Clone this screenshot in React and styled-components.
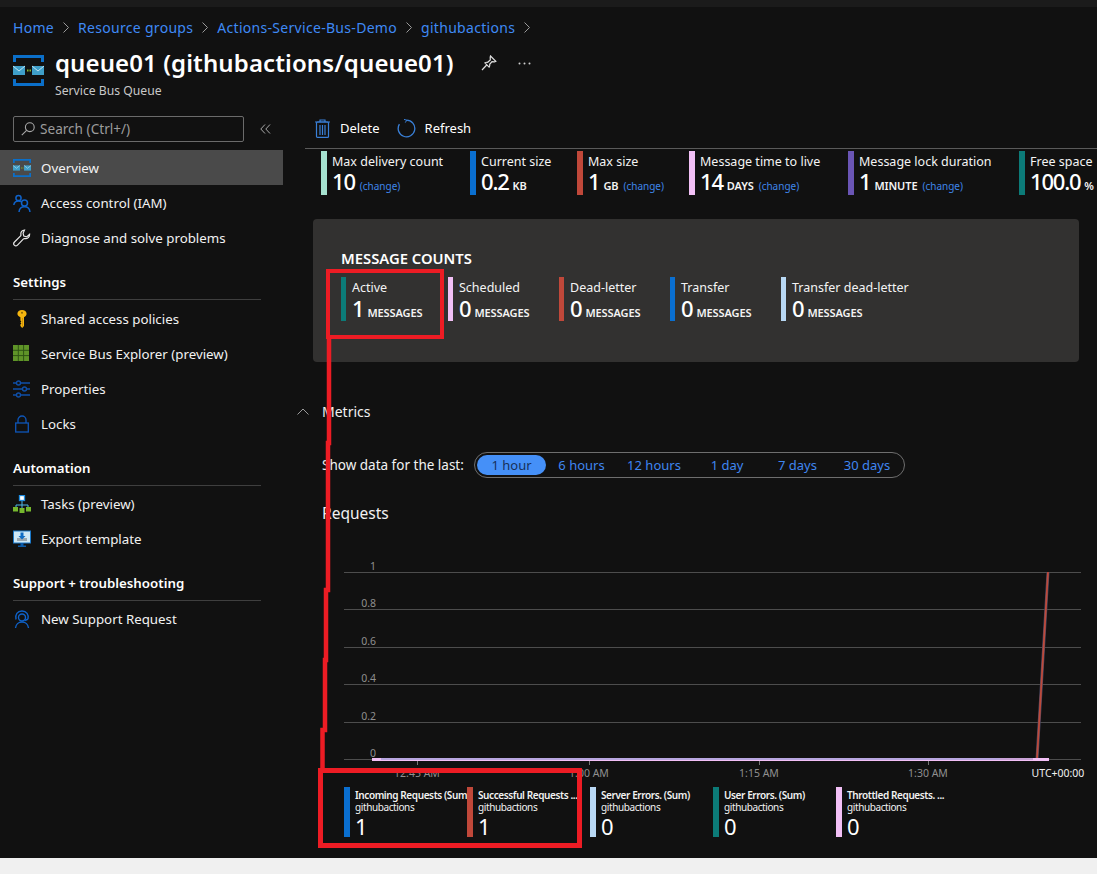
import React from "react";
import styled, { createGlobalStyle } from "styled-components";

const Global = createGlobalStyle`
  html, body { margin: 0; padding: 0; background: #f0f0f0; }
  body { font-family: "Noto Sans", "Liberation Sans", sans-serif; color: #f2f2f2; }
`;

const Page = styled.div`
  position: relative;
  width: 1097px;
  height: 874px;
  overflow: hidden;
  background: #f0f0f0;
`;

const Portal = styled.div`
  height: 858px;
  background: #111111;
  display: flex;
  flex-direction: column;
`;

const TopStrip = styled.div`
  height: 7px;
  background: #1b1b1b;
  flex: none;
`;

const Header = styled.header`
  height: 105px;
  flex: none;
  padding-left: 13px;
`;

const Breadcrumb = styled.nav`
  display: flex;
  align-items: center;
  height: 20px;
  margin-top: 10px;
  font-size: 14px;
  letter-spacing: 0.3px;
  a { color: #3f8af5; text-decoration: none; }
  svg { margin: 0 9px 0 9px; }
`;

const TitleRow = styled.div`
  display: flex;
  align-items: flex-start;
  margin-top: 10px;
`;

const TitleIcon = styled.div`
  width: 31px;
  height: 31px;
  margin-top: 8px;
  margin-right: 11px;
`;

const Title = styled.h1`
  margin: 0;
  font-size: 24px;
  line-height: 32px;
  font-weight: 600;
  letter-spacing: 0.1px;
  color: #fff;
  white-space: nowrap;
`;

const Subtitle = styled.div`
  font-size: 12.2px;
  line-height: 16px;
  margin-top: 4px;
  color: #c8c8c8;
`;

const TitleAction = styled.div`
  margin-left: ${p => p.$gap}px;
  margin-top: 6px;
  height: 20px;
  display: flex;
  align-items: center;
`;

const Body = styled.div`
  display: flex;
  flex: 1;
  min-height: 0;
`;

const Sidebar = styled.aside`
  width: 283px;
  flex: none;
`;

const SearchRow = styled.div`
  display: flex;
  align-items: center;
  height: 26px;
  margin: 4px 0 8px 13px;
`;

const SearchBox = styled.div`
  width: 231px;
  height: 26px;
  box-sizing: border-box;
  border: 1px solid #6b6b6b;
  border-radius: 2px;
  display: flex;
  align-items: center;
  padding: 0 0 1px 7px;
  gap: 5px;
  font-size: 13.6px;
  color: #9c9c9c;
`;

const Collapse = styled.div`
  margin-left: 16px;
  display: flex;
`;

const NavRow = styled.div`
  display: flex;
  align-items: center;
  height: 35px;
  padding-left: 13px;
  gap: 10px;
  font-size: 13.3px;
  color: #f2f2f2;
  background: ${p => (p.$active ? "#4a4a4a" : "transparent")};
`;

const NavIcon = styled.span`
  width: 18px;
  height: 18px;
  display: flex;
  flex: none;
`;

const SectionTitle = styled.div`
  margin: 0 22px ${p => p.$after}px 13px;
  height: 45px;
  box-sizing: border-box;
  display: flex;
  align-items: flex-end;
  padding-bottom: 7px;
  line-height: 20px;
  border-bottom: 1px solid #3f3f3f;
  font-size: 13.3px;
  font-weight: 600;
  color: #fff;
`;

const Main = styled.main`
  flex: 1;
  min-width: 0;
`;

const Toolbar = styled.div`
  height: 37px;
  box-sizing: border-box;
  margin-left: 22px;
  border-bottom: 1px solid #5a5a5a;
  display: flex;
  align-items: center;
  padding-bottom: 4px;
  font-size: 13px;
  color: #fff;
`;

const ToolButton = styled.div`
  display: flex;
  align-items: center;
  gap: ${p => p.$gap}px;
  margin-left: ${p => p.$left}px;
`;

const Essentials = styled.div`
  display: grid;
  grid-template-columns: 149px 107px 112px 159px 171px 78px;
  margin: 2px 0 0 38px;
  height: 44px;
  white-space: nowrap;
`;

const Tile = styled.div`
  position: relative;
  height: ${p => p.$tall}px;
  padding-left: ${p => p.$pad}px;
  border-left: ${p => p.$bar}px solid ${p => p.$color};
`;

const TileLabel = styled.div`
  font-size: 12.5px;
  line-height: 18px;
  margin-top: 2px;
  margin-bottom: -1px;
  color: #f4f4f4;
`;

const EssentialLabel = styled(TileLabel)`
  margin-bottom: -2px;
`;

const TileValue = styled.div`
  display: flex;
  align-items: baseline;
  gap: 4px;
  line-height: 24px;
  font-size: 22px;
  letter-spacing: -1.2px;
  font-weight: 500;
  color: #fff;
`;

const Unit = styled.span`
  font-size: 11px;
  font-weight: 600;
  letter-spacing: -0.1px;
  color: #f4f4f4;
  text-transform: uppercase;
`;

const Change = styled.span`
  font-size: 10px;
  letter-spacing: 0;
  font-weight: 400;
  color: #3f86e8;
  margin-left: 1px;
`;

const CountCard = styled.section`
  width: 766px;
  height: 143px;
  margin: 24px 0 0 30px;
  box-sizing: border-box;
  background: #323130;
  border-radius: 4px;
  padding: 28px 0 0 28px;
`;

const CardTitle = styled.h2`
  margin: 0 0 8px;
  font-size: 14.8px;
  line-height: 22px;
  font-weight: 600;
  color: #fff;
`;

const CountRow = styled.div`
  display: grid;
  grid-template-columns: 107px 111px 111px 111px 150px;
  white-space: nowrap;
`;

const MetricsRow = styled.div`
  display: flex;
  align-items: center;
  margin: 39px 0 0 14px;
  height: 20px;
  gap: 13px;
  font-size: 14px;
  color: #f2f2f2;
`;

const RangeRow = styled.div`
  display: flex;
  align-items: center;
  margin: 31px 0 0 39px;
  height: 26px;
  font-size: 13.5px;
  color: #f2f2f2;
  white-space: nowrap;
`;

const RangeLabel = styled.div`
  width: 152px;
`;

const RangePill = styled.div`
  width: 431px;
  height: 26px;
  box-sizing: border-box;
  border: 1px solid #6e6e6e;
  border-radius: 13px;
  padding: 2px;
  display: flex;
`;

const RangeOption = styled.div`
  width: ${p => p.$w}px;
  height: 20px;
  line-height: 20px;
  text-align: center;
  font-size: 13px;
  border-radius: 10px;
  color: ${p => (p.$on ? "#17305a" : "#3f86f0")};
  background: ${p => (p.$on ? "#4590f8" : "transparent")};
`;

const ChartTitle = styled.h3`
  margin: 24px 0 0 39px;
  height: 22px;
  line-height: 22px;
  font-size: 15.5px;
  font-weight: 400;
  color: #f2f2f2;
`;

const ChartFrame = styled.svg`
  display: block;
  margin: 29px 0 0 39px;
  width: 775px;
  height: 232px;
  font-family: "Noto Sans", "Liberation Sans", sans-serif;
`;

const Legend = styled.div`
  display: grid;
  grid-template-columns: repeat(5, 123px);
  margin: 2px 0 0 61px;
  white-space: nowrap;
`;

const LegendItem = styled(Tile)`
  box-sizing: border-box;
  overflow: hidden;
  padding-top: 2px;
`;

const LegendLine = styled.div`
  font-size: 10px;
  line-height: 12px;
  letter-spacing: -0.4px;
  font-weight: ${p => (p.$strong ? 600 : 400)};
  color: #f2f2f2;
`;

const LegendValue = styled.div`
  font-size: 22px;
  line-height: 26px;
  letter-spacing: -1px;
  color: #fff;
`;

const RedBox = styled.div`
  position: absolute;
  left: ${p => p.$x}px;
  top: ${p => p.$y}px;
  width: ${p => p.$w}px;
  height: ${p => p.$h}px;
  box-sizing: border-box;
  border: ${p => p.$t}px solid #ed1c24;
  pointer-events: none;
`;

const RedLine = styled.svg`
  position: absolute;
  left: 316px;
  top: 335px;
`;

const BusIcon = () => (
  <svg width="100%" height="100%" viewBox="0 0 31 31">
    <path d="M0 0h31v7h-3V3H3v4H0zM0 31h31v-7h-3v4H3v-4H0z" fill="#0b6fc9" />
    <rect x="0" y="11" width="12" height="9" fill="#3f9fc9" />
    <rect x="19" y="11" width="12" height="9" fill="#3f9fc9" />
    <path d="M0 11l6 5 6-5M19 11l6 5 6-5" fill="none" stroke="#cfeaf5" strokeWidth=".9" />
    <path d="M14 14.500h1.500v2H14zM16.500 14.500H18v2h-1.500z" fill="#84b82c" />
  </svg>
);

const AccessIcon = () => (
  <svg width="18" height="18" viewBox="0 0 18 18" fill="none" stroke="#0f62c9" strokeWidth="1.500">
    <circle cx="5.500" cy="4" r="2.600" />
    <path d="M.8 11c.4-2.600 2.200-4 4.700-4 1 0 1.800.2 2.500.7" />
    <circle cx="11.500" cy="9" r="3" />
    <path d="M6 18c.3-3 2.400-5.200 5.500-5.200S16.700 15 17 18" />
  </svg>
);

const WrenchIcon = () => (
  <svg width="18" height="18" viewBox="0 0 18 18" fill="none" stroke="#e8e8e8" strokeWidth="1.200">
    <path d="M11.500 1c-2.400.2-4 2.200-3.600 4.600.1.500.1.900-.3 1.300L1.500 13c-1 1-1 2.300-.2 3.200.9.900 2.200.9 3.200-.1l6-6.200c.4-.4.800-.4 1.300-.3 2.600.5 5-1.600 4.800-4.400l-3 2.700-2.800-.8-.7-2.800z" />
  </svg>
);

const KeyIcon = () => (
  <svg width="18" height="18" viewBox="0 0 18 18">
    <path d="M9 0c2.600 0 4.600 1.600 4.600 3.800 0 1.600-1 2.800-2.600 3.400V16l-1.800 2L7.400 16v-1.400l1-1-1-1 1-1-1-1V7.200C5.600 6.600 4.400 5.400 4.400 3.800 4.400 1.600 6.400 0 9 0z" fill="#f6b60f" />
    <circle cx="9" cy="2.700" r="1" fill="#8a6408" />
    <path d="M10 8v8l-.8 1V8z" fill="#c98d08" />
  </svg>
);

const GridIcon = () => (
  <svg width="16" height="16" viewBox="0 0 16 16">
    <rect width="16" height="16" fill="#5f9428" />
    <path d="M5.300 0v16M10.600 0v16M0 5.300h16M0 10.600h16" stroke="#2f5414" strokeWidth="1" />
  </svg>
);

const SlidersIcon = () => (
  <svg width="18" height="18" viewBox="0 0 18 18" fill="none" stroke="#0f4fa8" strokeWidth="1.400">
    <path d="M0 3h3.500M7.500 3H17M0 9h9.500M13.500 9H17M0 15h3.500M7.500 15H17" />
    <circle cx="5.500" cy="3" r="2" />
    <circle cx="11.500" cy="9" r="2" />
    <circle cx="5.500" cy="15" r="2" />
  </svg>
);

const LockIcon = () => (
  <svg width="18" height="18" viewBox="0 0 18 18" fill="none" stroke="#0f56b8" strokeWidth="1.300">
    <rect x="2.700" y="8" width="12.600" height="9" />
    <path d="M5 8V5a4 4 0 0 1 8 0v3" />
  </svg>
);

const TasksIcon = () => (
  <svg width="18" height="18" viewBox="0 0 18 18">
    <path d="M9 5v4M3 13v-3h12v3M9 9v4" fill="none" stroke="#4fb8e8" strokeWidth="1" />
    <rect x="6.500" y="0.500" width="5" height="5" fill="#fff" stroke="#1f8de0" strokeWidth="1.300" />
    <rect x="0" y="12" width="5" height="4.500" fill="#76b82e" />
    <rect x="6.500" y="13" width="5" height="5" fill="#76b82e" />
    <rect x="13" y="12" width="5" height="4.500" fill="#76b82e" />
  </svg>
);

const ExportIcon = () => (
  <svg width="18" height="18" viewBox="0 0 18 18">
    <rect x="0.500" y="1" width="17" height="12" fill="#cfe8f6" stroke="#1b78c8" strokeWidth="1" />
    <rect x="4" y="8" width="10" height="3" fill="#9aa8b2" />
    <path d="M7.500 2.500h3V6h2L9 9.500 5.500 6h2z" fill="#0f6cc4" />
    <path d="M7.500 13h3v2.500H13V17H5v-1.500h2.500z" fill="#0b5aa8" />
  </svg>
);

const SupportIcon = () => (
  <svg width="18" height="18" viewBox="0 0 18 18" fill="none" stroke="#0f62c9" strokeWidth="1.400">
    <path d="M3 9.500C1.800 4.500 4.500 1 9 1s7 3.500 6 8" />
    <circle cx="9" cy="7.500" r="3.500" />
    <path d="M2.500 18c.3-3.500 3-6 6.500-6s6.200 2.500 6.500 6" />
    <path d="M15 9l-3 1.500" />
  </svg>
);

const Chevron = () => (
  <svg width="6" height="11" viewBox="0 0 6 11" fill="none" stroke="#9a9a9a" strokeWidth="1">
    <path d="M.5.500l5 5-5 5" />
  </svg>
);

const PinIcon = () => (
  <svg width="16" height="16" viewBox="0 0 16 16" fill="none" stroke="#dedede" strokeWidth="1.200">
    <path d="M9.500 1l5.300 5.200-1.300.6-2.500-.1-2.300 2.600c.2 1.200 0 2-.6 2.800L3.900 7.900c.8-.6 1.700-.8 2.800-.6l2.600-2.400-.1-2.500zM5.700 10L1 15" />
  </svg>
);

const TrashIcon = () => (
  <svg width="15" height="19" viewBox="0 0 15 19" fill="none" stroke="#3a80d8" strokeWidth="1.200">
    <path d="M0 3h15M5 3V1h5v2" />
    <rect x="1.500" y="3" width="12" height="15.400" rx="1" />
    <path d="M5 6v10M7.500 6v10M10 6v10" />
  </svg>
);

const RefreshIcon = () => (
  <svg width="19" height="19" viewBox="0 0 19 19" fill="none" stroke="#3a80d8" strokeWidth="1.300">
    <path d="M9.500 1.200A8.300 8.300 0 1 1 2.400 5.200" />
    <path d="M7 .4l2.700.8L8.300 3.600" strokeWidth="1" />
  </svg>
);

const DotsIcon = () => (
  <svg width="13" height="3" viewBox="0 0 13 3">
    <circle cx="1.500" cy="1.500" r="1" fill="#cfcfcf" />
    <circle cx="6.500" cy="1.500" r="1" fill="#cfcfcf" />
    <circle cx="11.500" cy="1.500" r="1" fill="#cfcfcf" />
  </svg>
);

const essentials = [
  { label: "Max delivery count", value: "10", change: true, color: "#a6e2d0" },
  { label: "Current size", value: "0.2", unit: "KB", color: "#0a6fd0" },
  { label: "Max size", value: "1", unit: "GB", change: true, color: "#c0483a" },
  { label: "Message time to live", value: "14", unit: "days", change: true, color: "#f2c0f6" },
  { label: "Message lock duration", value: "1", unit: "minute", change: true, color: "#6a55b5" },
  { label: "Free space", value: "100.0", unit: "%", color: "#0c7b78" },
];

const counts = [
  { label: "Active", value: "1", color: "#0c7b78" },
  { label: "Scheduled", value: "0", color: "#f2c0f6" },
  { label: "Dead-letter", value: "0", color: "#c0483a" },
  { label: "Transfer", value: "0", color: "#0a6fd0" },
  { label: "Transfer dead-letter", value: "0", color: "#b8d8f4" },
];

const ranges = [
  { label: "1 hour", w: 69, on: true },
  { label: "6 hours", w: 71 },
  { label: "12 hours", w: 74 },
  { label: "1 day", w: 72 },
  { label: "7 days", w: 69 },
  { label: "30 days", w: 70 },
];

const legend = [
  { label: "Incoming Requests (Sum)", value: "1", color: "#0a6fd0" },
  { label: "Successful Requests ...", value: "1", color: "#c0483a" },
  { label: "Server Errors. (Sum)", value: "0", color: "#b8d8f4" },
  { label: "User Errors. (Sum)", value: "0", color: "#0c7b78" },
  { label: "Throttled Requests. ...", value: "0", color: "#f2c0f6" },
];

const gridLines = [
  { y: 572, label: "1" },
  { y: 609, label: "0.8" },
  { y: 647, label: "0.6" },
  { y: 684, label: "0.4" },
  { y: 722, label: "0.2" },
  { y: 759, label: "0" },
];

const xTicks = [
  { x: 417, label: "12:45 AM" },
  { x: 589, label: "1:00 AM" },
  { x: 759, label: "1:15 AM" },
  { x: 928, label: "1:30 AM" },
];

const Chart = () => (
  <ChartFrame viewBox="322 553 775 232">
    {gridLines.map(l => (
      <g key={l.y}>
        <line x1="344" x2="1081" y1={l.y + 0.5} y2={l.y + 0.5} stroke="#4d4d4d" />
        <text x="376" y={l.y - 2} textAnchor="end" fontSize="10.500" fill="#8f8f8f">{l.label}</text>
      </g>
    ))}
    {xTicks.map(t => (
      <g key={t.x}>
        <line x1={t.x + 0.5} x2={t.x + 0.5} y1="760" y2="765" stroke="#777" />
        <text x={t.x} y="777" textAnchor="middle" fontSize="10.500" fill="#8f8f8f">{t.label}</text>
      </g>
    ))}
    <text x="1058" y="777" textAnchor="middle" fontSize="10.500" fill="#f2f2f2">UTC+00:00</text>
    <line x1="1037" y1="759" x2="1048" y2="572" stroke="#4a4660" strokeWidth="3" />
    <line x1="1037" y1="759" x2="1048" y2="572" stroke="#bf4a3a" strokeWidth="1.800" />
    <rect x="372" y="758" width="677" height="3" fill="#f2c0f6" />
    <rect x="381" y="758" width="619" height="2" fill="#b8a6e0" />
    <rect x="1000" y="758" width="33" height="2" fill="#c9a2d6" />
  </ChartFrame>
);

export default function App() {
  return (
    <Page>
      <Global />
      <Portal>
        <TopStrip />
        <Header>
          <Breadcrumb>
            <a>Home</a><Chevron />
            <a>Resource groups</a><Chevron />
            <a>Actions-Service-Bus-Demo</a><Chevron />
            <a>githubactions</a><Chevron />
          </Breadcrumb>
          <TitleRow>
            <TitleIcon><BusIcon /></TitleIcon>
            <div>
              <Title>queue01 (githubactions/queue01)</Title>
              <Subtitle>Service Bus Queue</Subtitle>
            </div>
            <TitleAction $gap={27}><PinIcon /></TitleAction>
            <TitleAction $gap={21}><DotsIcon /></TitleAction>
          </TitleRow>
        </Header>
        <Body>
          <Sidebar>
            <SearchRow>
              <SearchBox>
                <svg width="14" height="14" viewBox="0 0 14 14" fill="none" stroke="#a8a8a8" strokeWidth="1.100">
                  <circle cx="8.800" cy="5.200" r="4.400" />
                  <path d="M5.600 8.400L.8 13.200" />
                </svg>
                Search (Ctrl+/)
              </SearchBox>
              <Collapse>
                <svg width="11" height="10" viewBox="0 0 11 10" fill="none" stroke="#a8a8a8">
                  <path d="M5 .5L.8 5 5 9.500M10 .5L5.800 5l4.200 4.500" />
                </svg>
              </Collapse>
            </SearchRow>
            <NavRow $active><NavIcon><BusIcon /></NavIcon>Overview</NavRow>
            <NavRow><NavIcon><AccessIcon /></NavIcon>Access control (IAM)</NavRow>
            <NavRow><NavIcon><WrenchIcon /></NavIcon>Diagnose and solve problems</NavRow>
            <SectionTitle $after={1}>Settings</SectionTitle>
            <NavRow><NavIcon><KeyIcon /></NavIcon>Shared access policies</NavRow>
            <NavRow><NavIcon><GridIcon /></NavIcon>Service Bus Explorer (preview)</NavRow>
            <NavRow><NavIcon><SlidersIcon /></NavIcon>Properties</NavRow>
            <NavRow><NavIcon><LockIcon /></NavIcon>Locks</NavRow>
            <SectionTitle $after={0}>Automation</SectionTitle>
            <NavRow><NavIcon><TasksIcon /></NavIcon>Tasks (preview)</NavRow>
            <NavRow><NavIcon><ExportIcon /></NavIcon>Export template</NavRow>
            <SectionTitle $after={0}>Support + troubleshooting</SectionTitle>
            <NavRow><NavIcon><SupportIcon /></NavIcon>New Support Request</NavRow>
          </Sidebar>
          <Main>
            <Toolbar>
              <ToolButton $gap={10} $left={10}><TrashIcon />Delete</ToolButton>
              <ToolButton $gap={9} $left={17}><RefreshIcon />Refresh</ToolButton>
            </Toolbar>
            <Essentials>
              {essentials.map(t => (
                <Tile key={t.label} $tall={44} $bar={6} $pad={5} $color={t.color}>
                  <EssentialLabel>{t.label}</EssentialLabel>
                  <TileValue>
                    {t.value}
                    {t.unit && <Unit>{t.unit}</Unit>}
                    {t.change && <Change>(change)</Change>}
                  </TileValue>
                </Tile>
              ))}
            </Essentials>
            <CountCard>
              <CardTitle>MESSAGE COUNTS</CardTitle>
              <CountRow>
                {counts.map(t => (
                  <Tile key={t.label} $tall={44} $bar={5} $pad={6} $color={t.color}>
                    <TileLabel>{t.label}</TileLabel>
                    <TileValue>
                      {t.value}
                      <Unit>Messages</Unit>
                    </TileValue>
                  </Tile>
                ))}
              </CountRow>
            </CountCard>
            <MetricsRow>
              <svg width="12" height="7" viewBox="0 0 12 7" fill="none" stroke="#9a9a9a">
                <path d="M.5 6.500L6 1l5.500 5.500" />
              </svg>
              Metrics
            </MetricsRow>
            <RangeRow>
              <RangeLabel>Show data for the last:</RangeLabel>
              <RangePill>
                {ranges.map(r => (
                  <RangeOption key={r.label} $w={r.w} $on={r.on}>{r.label}</RangeOption>
                ))}
              </RangePill>
            </RangeRow>
            <ChartTitle>Requests</ChartTitle>
            <Chart />
            <Legend>
              {legend.map(l => (
                <LegendItem key={l.label} $tall={50} $bar={6} $pad={5} $color={l.color}>
                  <LegendLine $strong>{l.label}</LegendLine>
                  <LegendLine>githubactions</LegendLine>
                  <LegendValue>{l.value}</LegendValue>
                </LegendItem>
              ))}
            </Legend>
          </Main>
        </Body>
      </Portal>
      <RedBox $x={326} $y={269} $w={118} $h={70} $t={4} />
      <RedBox $x={318} $y={768} $w={264} $h={80} $t={5} />
      <RedLine width="20" height="436" viewBox="316 335 20 436">
        <path d="M329 336V443H328V590H326V660H325V730H322.500V770" fill="none" stroke="#ed1c24" strokeWidth="4.500" />
      </RedLine>
    </Page>
  );
}
